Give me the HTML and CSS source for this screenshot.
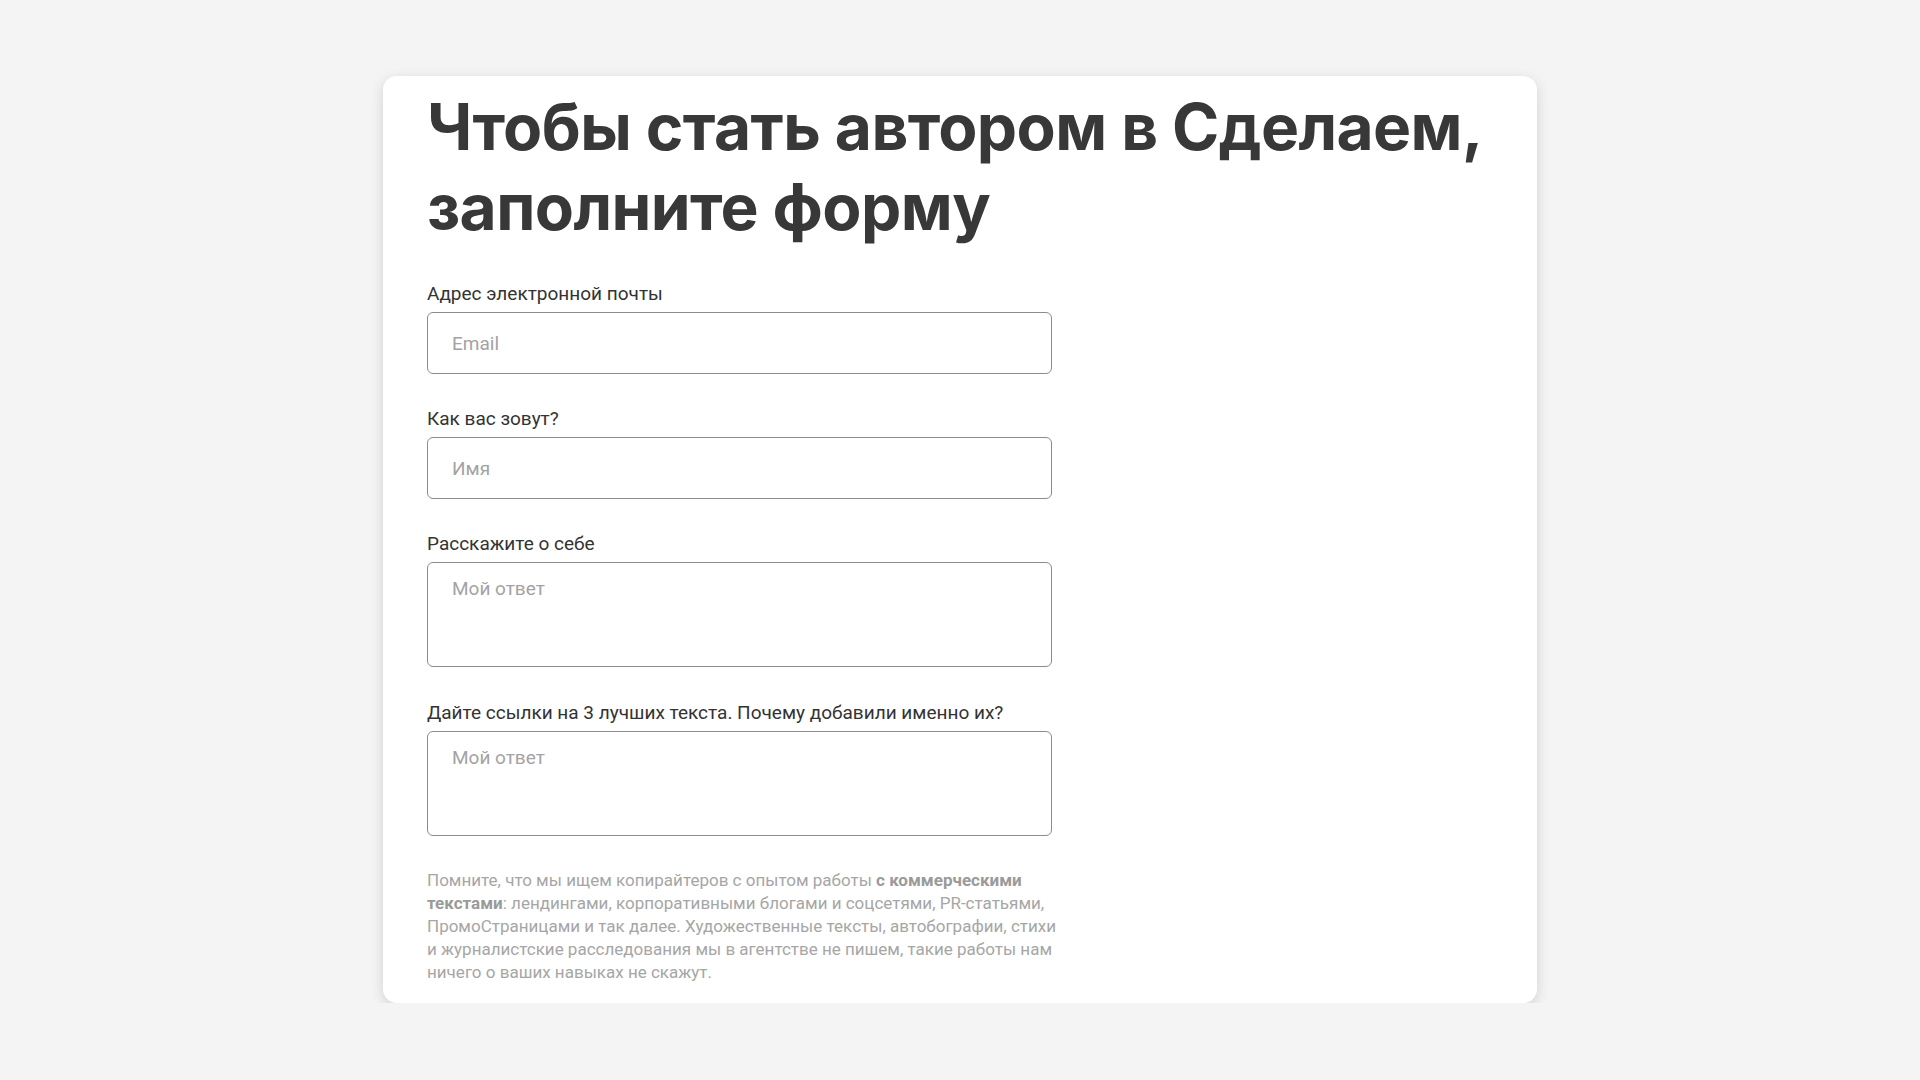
FILE: index.html
```html
<!DOCTYPE html>
<html lang="ru">
<head>
<meta charset="utf-8">
<title>Стать автором</title>
<link rel="stylesheet" href="styles.css">
</head>
<body>
<main class="card">
  <h1 class="title">Чтобы стать автором в Сделаем, заполните форму</h1>
  <form class="form">
    <div class="field">
      <label class="label" for="email">Адрес электронной почты</label>
      <input class="input" id="email" type="text" placeholder="Email">
    </div>
    <div class="field">
      <label class="label" for="name">Как вас зовут?</label>
      <input class="input" id="name" type="text" placeholder="Имя">
    </div>
    <div class="field field-area">
      <label class="label" for="about">Расскажите о себе</label>
      <textarea class="input area" id="about" placeholder="Мой ответ"></textarea>
    </div>
    <div class="field field-last">
      <label class="label" for="links">Дайте ссылки на 3 лучших текста. Почему добавили именно их?</label>
      <textarea class="input area" id="links" placeholder="Мой ответ"></textarea>
    </div>
    <p class="note">Помните, что мы ищем копирайтеров с опытом работы <b>с коммерческими текстами</b>: лендингами, корпоративными блогами и соцсетями, PR-статьями, ПромоСтраницами и так далее. Художественные тексты, автобографии, стихи и журналистские расследования мы в агентстве не пишем, такие работы нам ничего о ваших навыках не скажут.</p>
  </form>
</main>
</body>
</html>
```

FILE: styles.css
```css
* { box-sizing: border-box; }
html, body { margin: 0; padding: 0; }
body {
  background: #f4f4f4;
  font-family: Roboto, "Liberation Sans", sans-serif;
  color: #333;
}
.card {
  width: 1154px;
  margin: 76px auto 0;
  background: #fff;
  border-radius: 14px;
  box-shadow: 0 4px 14px rgba(0,0,0,0.14);
  padding: 11px 44px 19px;
}
.title {
  margin: 0 0 36px;
  font-family: Inter, "Liberation Sans", sans-serif;
  font-weight: 700;
  font-size: 64px;
  line-height: 80px;
  letter-spacing: -0.6px;
  color: #383838;
}
.form {
  width: 625px;
  display: flex;
  flex-direction: column;
}
.field {
  display: flex;
  flex-direction: column;
  margin-bottom: 34px;
}
.field-area { margin-bottom: 35px; }
.field-last { margin-bottom: 33px; }
.label {
  font-size: 19px;
  line-height: 22px;
  margin-bottom: 7px;
  color: #333;
}
.input {
  height: 62px;
  border: 1px solid #8c8c8c;
  border-radius: 6px;
  padding: 0 24px;
  font-family: Roboto, "Liberation Sans", sans-serif;
  font-size: 19px;
  color: #333;
  outline: none;
  background: #fff;
}
.input::placeholder { color: #a3a3a3; }
.area {
  height: 105px;
  padding: 14px 24px;
  resize: none;
  line-height: 24px;
}
.note {
  width: 642px;
  margin: 0;
  font-size: 17px;
  line-height: 23px;
  color: #a6a6a6;
}
.note b { color: #9a9a9a; font-weight: 700; }
```
